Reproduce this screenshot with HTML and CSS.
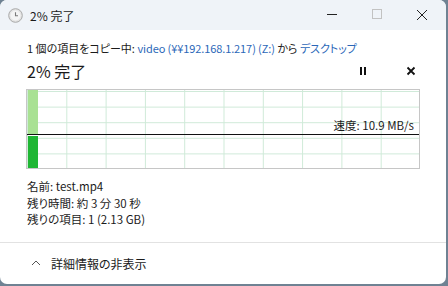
FILE: index.html
```html
<!DOCTYPE html>
<html lang="ja">
<head>
  <meta charset="UTF-8">
  <title>2% 完了</title>
  <link rel="stylesheet" href="styles.css">
</head>
<body>
  <div class="window">
    <!-- Title bar -->
    <div class="titlebar">
      <svg class="app-icon" width="15" height="15" viewBox="0 0 15 15">
        <circle cx="7.5" cy="7.5" r="6.8" fill="#e4e4e4" stroke="#a9a9a9" stroke-width="1"/>
        <circle cx="7.5" cy="7.5" r="5" fill="#f4f4f4"/>
        <path d="M7.5 4.2 V7.8 H10" fill="none" stroke="#7a7a7a" stroke-width="1.1"/>
      </svg>
      <span class="title">2% 完了</span>
      <div class="win-controls">
        <svg class="ctl" width="46" height="30" viewBox="0 0 46 30">
          <path d="M19 14.5 H29" stroke="#222" stroke-width="1"/>
        </svg>
        <svg class="ctl" width="46" height="30" viewBox="0 0 46 30">
          <rect x="18.5" y="9.5" width="9" height="9" fill="none" stroke="#c2c2c2" stroke-width="1"/>
        </svg>
        <svg class="ctl" width="46" height="30" viewBox="0 0 46 30">
          <path d="M17 10 L27 20 M27 10 L17 20" stroke="#222" stroke-width="1"/>
        </svg>
      </div>
    </div>

    <!-- Copy progress -->
    <div class="content">
      <div class="source">1 個の項目をコピー中: <span class="link">video (¥¥192.168.1.217) (Z:)</span> から <span class="link">デスクトップ</span></div>
      <div class="status-row">
        <span class="percent">2% 完了</span>
        <div class="actions">
          <svg width="10" height="10" viewBox="0 0 10 10">
            <rect x="2" y="1" width="2" height="8" fill="#111"/>
            <rect x="6" y="1" width="2" height="8" fill="#111"/>
          </svg>
          <svg width="10" height="10" viewBox="0 0 10 10">
            <path d="M1.5 1.5 L8.5 8.5 M8.5 1.5 L1.5 8.5" stroke="#111" stroke-width="1.8"/>
          </svg>
        </div>
      </div>
      <div class="graph">
        <div class="bar-done"></div>
        <div class="bar-now"></div>
        <div class="speed-line"></div>
        <div class="speed">速度: 10.9 MB/s</div>
      </div>
      <div class="details">
        <div>名前: test.mp4</div>
        <div>残り時間: 約 3 分 30 秒</div>
        <div>残りの項目: 1 (2.13 GB)</div>
      </div>
    </div>

    <!-- Footer -->
    <div class="footer">
      <svg width="10" height="8" viewBox="0 0 10 8">
        <path d="M1 6 L5 2 L9 6" fill="none" stroke="#555" stroke-width="1"/>
      </svg>
      <span>詳細情報の非表示</span>
    </div>
  </div>
</body>
</html>
```

FILE: styles.css
```css
body {
  margin: 0;
  background: #6f8293;
  font-family: "Noto Sans CJK JP", sans-serif;
  font-feature-settings: "palt";
  color: #1b1b1b;
}
.window {
  width: 446px;
  height: 284px;
  background: #fff;
  border-radius: 7px;
  overflow: hidden;
  display: flex;
  flex-direction: column;
}
.titlebar {
  height: 30px;
  background: #eff3f8;
  display: flex;
  align-items: center;
  font-size: 12px;
}
.app-icon {
  margin-left: 8px;
  margin-right: 7px;
}
.title {
  flex: 1;
}
.win-controls {
  display: flex;
}
.ctl {
  display: block;
}
.content {
  padding: 0 26px 0 27px;
  font-size: 11.5px;
}
.source {
  margin-top: 10px;
  line-height: 16px;
  font-size: 11px;
  white-space: nowrap;
}
.link {
  color: #2b67b8;
  letter-spacing: -0.1px;
}
.status-row {
  margin-top: 4px;
  height: 22px;
  display: flex;
  align-items: center;
}
.percent {
  flex: 1;
  font-size: 16px;
}
.actions {
  display: flex;
  gap: 38px;
  margin-right: 4px;
}
.actions svg {
  display: block;
}
.graph {
  position: relative;
  margin-top: 7px;
  margin-left: -1px;
  width: 392px;
  height: 78px;
  border: 1px solid #c6c6c6;
  background-image:
    linear-gradient(to right, transparent 38.3px, #cfead8 38.3px),
    linear-gradient(to bottom, transparent 14.6px, #cfead8 14.6px);
  background-size: 39.3px 100%, 100% 15.6px;
  background-position: 1px 0, 0 2px;
}
.bar-done {
  position: absolute;
  left: 1px;
  top: 0;
  width: 10px;
  height: 45px;
  background: #a9e193;
}
.bar-now {
  position: absolute;
  left: 1px;
  top: 46px;
  width: 10px;
  height: 32px;
  background: #1fb634;
}
.speed-line {
  position: absolute;
  left: 0;
  right: 0;
  top: 44px;
  height: 1px;
  background: #111;
}
.speed {
  position: absolute;
  right: 5px;
  top: 27px;
  line-height: 16px;
}
.details {
  margin-top: 9px;
  line-height: 16.5px;
}
.footer {
  margin-top: 14px;
  border-top: 1px solid #e2e2e2;
  flex: 1;
  display: flex;
  align-items: center;
  padding-left: 31px;
  gap: 10px;
  font-size: 12px;
}
.footer svg {
  display: block;
}
```
